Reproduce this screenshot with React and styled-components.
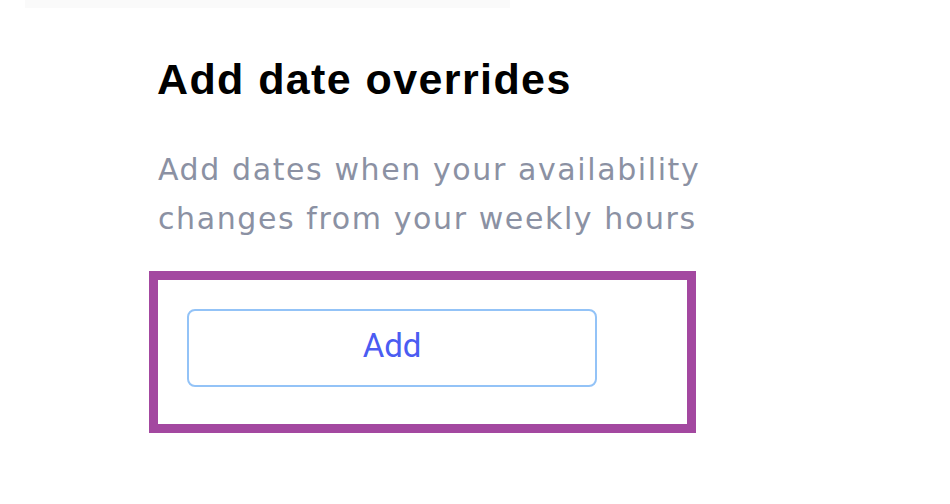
import React from 'react';
import styled, { createGlobalStyle } from 'styled-components';

const GlobalStyle = createGlobalStyle`
  html, body {
    margin: 0;
    padding: 0;
    background: #ffffff;
  }
`

const Page = styled.div`
  width: 950px;
  height: 504px;
  background: #ffffff;
  display: flex;
  flex-direction: column;
  overflow: hidden;
`

const TopEdge = styled.div`
  margin-left: 25px;
  width: 485px;
  height: 8px;
  background: #fafafa;
`

const Section = styled.section`
  display: flex;
  flex-direction: column;
  align-items: flex-start;
  padding: 46px 0 0 149px;
`

const Title = styled.h2`
  margin: 0 0 0 8px;
  font-family: "Liberation Sans", Arial, sans-serif;
  font-weight: 700;
  font-size: 43px;
  line-height: 50px;
  letter-spacing: 1.4px;
  color: #000000;
`

const Description = styled.p`
  margin: 41px 0 0 9px;
  font-family: "DejaVu Sans", sans-serif;
  font-size: 30px;
  line-height: 49px;
  letter-spacing: 1.6px;
  color: #8b91a3;
`

const Highlight = styled.div`
  margin-top: 28px;
  width: 547px;
  height: 162px;
  box-sizing: border-box;
  border: 9px solid #a348a0;
  padding: 29px 0 0 29px;
`

const AddButton = styled.button`
  width: 410px;
  height: 78px;
  box-sizing: border-box;
  padding: 0 0 6px;
  background: #ffffff;
  border: 2px solid #93c3f7;
  border-radius: 8px;
  font-family: Roboto, sans-serif;
  font-size: 33px;
  color: #4b5cf2;
  cursor: pointer;
`

const App = () => {
  return (
    <Page>
      <GlobalStyle />
      <TopEdge />
      <Section>
        <Title>Add date overrides</Title>
        <Description>
          Add dates when your availability
          <br />
          changes from your weekly hours
        </Description>
        <Highlight>
          <AddButton type='button'>Add</AddButton>
        </Highlight>
      </Section>
    </Page>
  )
}

export default App
